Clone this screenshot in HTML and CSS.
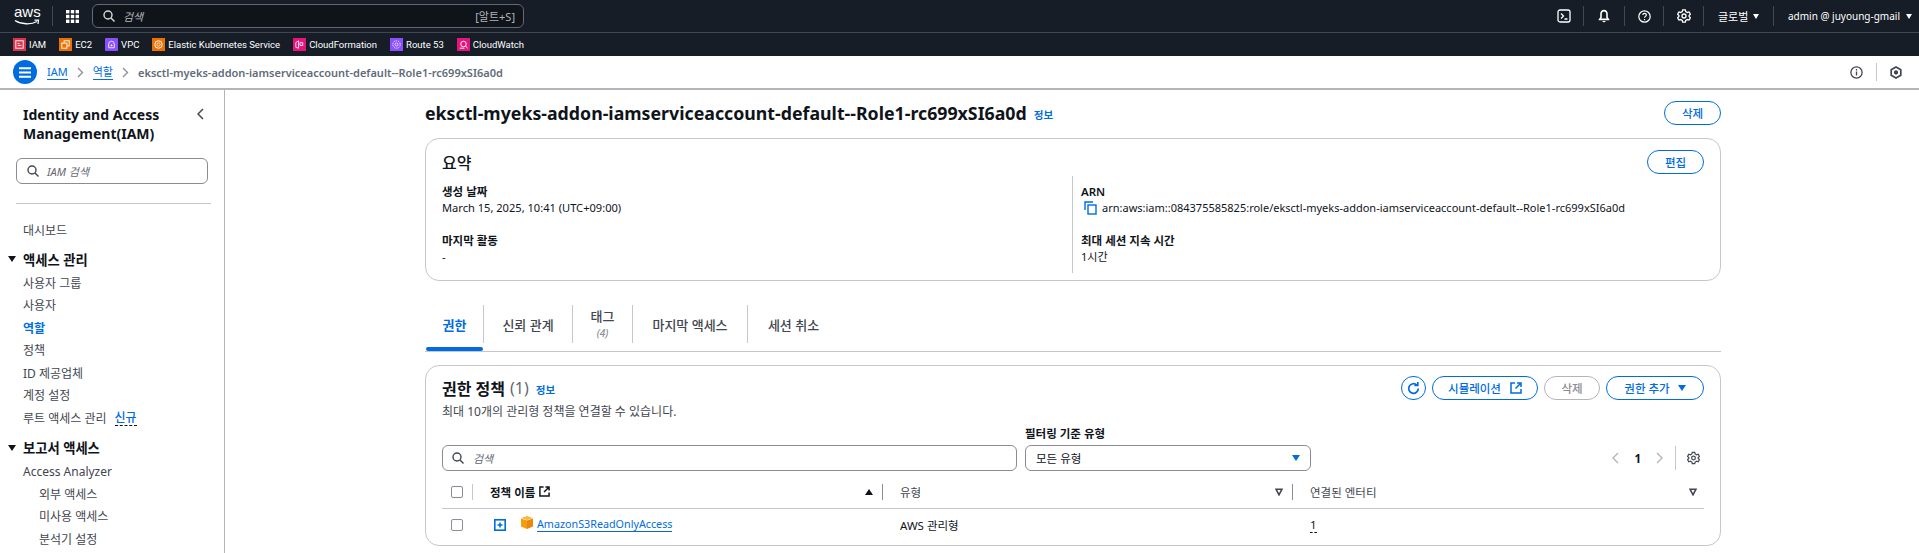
FILE: index.html
```html
<!DOCTYPE html>
<html lang="ko">
<head>
<meta charset="utf-8">
<title>IAM</title>
<link rel="stylesheet" href="styles.css">
</head>
<body>
<header class="topbar">
  <div class="aws-logo">
    <span class="aws-word">aws</span>
    <svg class="aws-smile" width="26" height="7" viewBox="0 0 26 7"><path d="M1 1.500C7 5.500 17 6 23 2.500" fill="none" stroke="#fff" stroke-width="1.400"/><path d="M20.500 1.200L24.500 1.200L24 5" fill="none" stroke="#fff" stroke-width="1.200"/></svg>
  </div>
  <div class="top-sep"></div>
  <svg class="grid-icon" width="13" height="13" viewBox="0 0 13 13" fill="#fff"><rect width="3.400" height="3.400"/><rect x="4.800" width="3.400" height="3.400"/><rect x="9.600" width="3.400" height="3.400"/><rect y="4.800" width="3.400" height="3.400"/><rect x="4.800" y="4.800" width="3.400" height="3.400"/><rect x="9.600" y="4.800" width="3.400" height="3.400"/><rect y="9.600" width="3.400" height="3.400"/><rect x="4.800" y="9.600" width="3.400" height="3.400"/><rect x="9.600" y="9.600" width="3.400" height="3.400"/></svg>
  <div class="top-search">
    <svg width="12" height="12" viewBox="0 0 12 12" fill="none" stroke="#d5dbdb" stroke-width="1.400"><circle cx="5" cy="5" r="4"/><path d="M8 8l3.500 3.500"/></svg>
    <span class="top-ph">검색</span>
    <span class="top-key">[알트+S]</span>
  </div>
  <div class="top-right">
    <div class="top-cell top-first"><svg width="14" height="14" viewBox="0 0 14 14" fill="none" stroke="#fff" stroke-width="1.300"><rect x="1" y="1" width="12" height="12" rx="2"/><path d="M4 4.500L6.500 7L4 9.500M7.500 10H10.500"/></svg></div>
    <div class="top-cell cell-bell"><svg width="14" height="14" viewBox="0 0 14 14" fill="#fff"><path d="M7 .8C4.600.8 3.200 2.600 3.200 5v3.200L1.600 10.400v.9h10.800v-.9L10.800 8.200V5C10.800 2.600 9.400.8 7 .8zM5.300 12a1.800 1.800 0 0 0 3.400 0z"/><path d="M7 2.400C5.500 2.400 4.800 3.600 4.800 5v3.700l-.6.9h5.600l-.6-.9V5c0-1.400-.7-2.600-2.200-2.600z" fill="#161d26"/></svg></div>
    <div class="top-cell cell-help"><svg width="13" height="13" viewBox="0 0 13 13" fill="none" stroke="#fff" stroke-width="1.200"><circle cx="6.500" cy="6.500" r="5.700"/><path d="M4.800 5.100c0-2.200 3.500-2.200 3.500-.1 0 1.400-1.800 1.400-1.800 2.800"/><path d="M6.500 9v1.200"/></svg></div>
    <div class="top-cell cell-gear"><svg width="14" height="14" viewBox="0 0 16 16" fill="none" stroke="#fff" stroke-width="1.500"><path d="M6.500 1h3l.5 2 1.800 1 2-.6 1.500 2.600-1.500 1.400v1.200l1.500 1.400-1.500 2.600-2-.6-1.800 1-.5 2h-3l-.5-2-1.800-1-2 .6-1.500-2.600 1.500-1.400V7.400L.7 6l1.500-2.600 2 .6 1.800-1z"/><circle cx="8" cy="8" r="2.300"/></svg></div>
    <div class="top-cell cell-global"><span>글로벌</span><i class="caret-white"></i></div>
    <div class="top-cell cell-user"><span class="user-name">admin @ juyoung-gmail</span><i class="caret-white"></i></div>
  </div>
</header>

<nav class="shortcuts">
  <a class="sc"><svg class="sc-ic" viewBox="0 0 14 14"><rect width="14" height="14" fill="#dd344c"/><rect x="3" y="3" width="8" height="8" fill="none" stroke="#fff"/><path d="M5 6h2M5 8h4" stroke="#fff"/></svg>IAM</a>
  <a class="sc"><svg class="sc-ic" viewBox="0 0 14 14"><rect width="14" height="14" fill="#ed7100"/><rect x="5.500" y="3" width="5.500" height="5.500" fill="none" stroke="#fff"/><rect x="3" y="5.500" width="5.500" height="5.500" fill="#ed7100" stroke="#fff"/></svg>EC2</a>
  <a class="sc"><svg class="sc-ic" viewBox="0 0 14 14"><rect width="14" height="14" rx="1" fill="#8c4fff"/><path d="M4 6.500a3 3 0 0 1 6 0v4H4z" fill="none" stroke="#fff" stroke-width=".9"/><circle cx="7" cy="8" r="1" fill="#fff"/></svg>VPC</a>
  <a class="sc"><svg class="sc-ic" viewBox="0 0 14 14"><rect width="14" height="14" fill="#ed7100"/><circle cx="7" cy="7" r="4" fill="none" stroke="#fff"/><circle cx="7" cy="7" r="1.800" fill="none" stroke="#fff" stroke-width=".8"/></svg>Elastic Kubernetes Service</a>
  <a class="sc"><svg class="sc-ic" viewBox="0 0 14 14"><rect width="14" height="14" fill="#e7157b"/><path d="M3 5l3-2v8l-3-1zM7.500 5h3v3h-3z" fill="none" stroke="#fff" stroke-width=".9"/></svg>CloudFormation</a>
  <a class="sc"><svg class="sc-ic" viewBox="0 0 14 14"><rect width="14" height="14" fill="#8c4fff"/><circle cx="7" cy="7" r="4" fill="none" stroke="#fff" stroke-dasharray="1.500 1"/><circle cx="7" cy="7" r="1.600" fill="none" stroke="#fff" stroke-width=".8"/></svg>Route 53</a>
  <a class="sc"><svg class="sc-ic" viewBox="0 0 14 14"><rect width="14" height="14" fill="#e7157b"/><circle cx="7" cy="6.500" r="3" fill="none" stroke="#fff"/><path d="M9 8.500l2.500 2.500M3 11h5" stroke="#fff"/></svg>CloudWatch</a>
</nav>

<div class="crumbs">
  <button class="menu-btn" aria-label="menu"><svg width="12" height="11" viewBox="0 0 12 11" stroke="#fff" stroke-width="2"><path d="M0 1.200h12M0 5.500h12M0 9.800h12"/></svg></button>
  <a class="crumb-link crumb-iam">IAM</a>
  <svg class="crumb-sep" width="7" height="11" viewBox="0 0 7 11" fill="none" stroke="#8c8c94" stroke-width="1.300"><path d="M1 1l4.500 4.500L1 10"/></svg>
  <a class="crumb-link">역할</a>
  <svg class="crumb-sep" width="7" height="11" viewBox="0 0 7 11" fill="none" stroke="#8c8c94" stroke-width="1.300"><path d="M1 1l4.500 4.500L1 10"/></svg>
  <span class="crumb-cur">eksctl-myeks-addon-iamserviceaccount-default--Role1-rc699xSI6a0d</span>
  <div class="crumb-tools">
    <svg width="13" height="13" viewBox="0 0 13 13" fill="none" stroke="#424650" stroke-width="1.300"><circle cx="6.500" cy="6.500" r="5.600"/><path d="M6.500 5.500v4M6.500 3v1.400"/></svg>
    <span class="tool-sep"></span>
    <svg width="12" height="13" viewBox="0 0 12 13" fill="none" stroke="#424650" stroke-width="1.700"><path d="M6 1l4.800 2.800v5.400L6 12 1.200 9.200V3.800z"/><circle cx="6" cy="6.500" r="1.300" fill="#424650"/></svg>
  </div>
</div>

<div class="layout">
  <aside class="sidebar">
    <div class="side-head">
      <h2 class="side-title">Identity and Access Management(IAM)</h2>
      <svg class="side-close" width="7" height="12" viewBox="0 0 7 12" fill="none" stroke="#424650" stroke-width="1.500"><path d="M6 1L1 6l5 5"/></svg>
    </div>
    <div class="side-search">
      <svg width="12" height="12" viewBox="0 0 12 12" fill="none" stroke="#424650" stroke-width="1.400"><circle cx="5" cy="5" r="4"/><path d="M8 8l3.500 3.500"/></svg>
      <span class="ph">IAM 검색</span>
    </div>
    <hr class="side-rule">
    <a class="side-item first">대시보드</a>
    <div class="side-section"><i class="caret-black"></i>액세스 관리</div>
    <a class="side-item">사용자 그룹</a>
    <a class="side-item">사용자</a>
    <a class="side-item active">역할</a>
    <a class="side-item">정책</a>
    <a class="side-item">ID 제공업체</a>
    <a class="side-item">계정 설정</a>
    <a class="side-item">루트 액세스 관리<span class="new-tag">신규</span></a>
    <div class="side-section second"><i class="caret-black"></i>보고서 액세스</div>
    <a class="side-item">Access Analyzer</a>
    <a class="side-item sub">외부 액세스</a>
    <a class="side-item sub">미사용 액세스</a>
    <a class="side-item sub">분석기 설정</a>
  </aside>

  <main class="main">
    <div class="title-row">
      <h1 class="page-title">eksctl-myeks-addon-iamserviceaccount-default--Role1-rc699xSI6a0d</h1>
      <a class="info-link">정보</a>
      <button class="btn push">삭제</button>
    </div>

    <section class="card summary">
      <div class="card-top">
        <h2 class="summary-title">요약</h2>
        <button class="btn push">편집</button>
      </div>
      <div class="summary-grid">
        <div class="summary-col">
          <div class="kv-label">생성 날짜</div>
          <div class="kv-value">March 15, 2025, 10:41 (UTC+09:00)</div>
          <div class="kv-label gap">마지막 활동</div>
          <div class="kv-value">-</div>
        </div>
        <div class="summary-col right">
          <div class="kv-label">ARN</div>
          <div class="kv-value arn"><svg width="13" height="14" viewBox="0 0 13 14" fill="none" stroke="#006ce0" stroke-width="1.400"><path d="M1 9V1h8"/><rect x="4" y="4" width="8" height="9"/></svg>arn:aws:iam::084375585825:role/eksctl-myeks-addon-iamserviceaccount-default--Role1-rc699xSI6a0d</div>
          <div class="kv-label gap">최대 세션 지속 시간</div>
          <div class="kv-value">1시간</div>
        </div>
      </div>
    </section>

    <div class="tabs">
      <div class="tab tab-a active"><div class="tab-in">권한</div></div>
      <div class="tab tab-b"><div class="tab-in">신뢰 관계</div></div>
      <div class="tab tab-c"><div class="tab-in tab-two"><span>태그</span><small>(4)</small></div></div>
      <div class="tab tab-d"><div class="tab-in">마지막 액세스</div></div>
      <div class="tab tab-e"><div class="tab-in no-line">세션 취소</div></div>
    </div>

    <section class="card policies">
      <div class="pol-head">
        <div>
          <div class="pol-title-line"><h2 class="pol-title">권한 정책</h2><span class="pol-count">(1)</span><a class="info-link">정보</a></div>
          <p class="pol-desc">최대 10개의 관리형 정책을 연결할 수 있습니다.</p>
        </div>
        <div class="pol-actions">
          <button class="btn icon-btn" aria-label="refresh"><svg width="15" height="15" viewBox="0 0 15 15" fill="none" stroke="#006ce0" stroke-width="1.700"><path d="M12.300 7.500a4.800 4.800 0 1 1-1.500-3.500"/><path d="M11.800 1v3.400H8.400"/></svg></button>
          <button class="btn btn-sim">시뮬레이션<svg width="12" height="12" viewBox="0 0 12 12" fill="none" stroke="#006ce0" stroke-width="1.500"><path d="M5 1H1v10h10V7M7 1h4v4M11 1L5.500 6.500"/></svg></button>
          <button class="btn btn-off">삭제</button>
          <button class="btn btn-add">권한 추가<i class="caret-blue"></i></button>
        </div>
      </div>
      <div class="filters">
        <div class="pol-search">
          <svg width="12" height="12" viewBox="0 0 12 12" fill="none" stroke="#424650" stroke-width="1.400"><circle cx="5" cy="5" r="4"/><path d="M8 8l3.500 3.500"/></svg>
          <span class="ph">검색</span>
        </div>
        <div class="select-wrap">
          <label class="select-label">필터링 기준 유형</label>
          <div class="select"><span>모든 유형</span><i class="caret-blue"></i></div>
        </div>
        <div class="pager">
          <svg width="7" height="12" viewBox="0 0 7 12" fill="none" stroke="#b4b4bb" stroke-width="1.400"><path d="M6 1L1 6l5 5"/></svg>
          <b>1</b>
          <svg width="7" height="12" viewBox="0 0 7 12" fill="none" stroke="#b4b4bb" stroke-width="1.400"><path d="M1 1l5 5-5 5"/></svg>
          <span class="pager-sep"></span>
          <svg width="13" height="14" viewBox="0 0 16 16" fill="none" stroke="#424650" stroke-width="1.500"><path d="M6.500 1h3l.5 2 1.800 1 2-.6 1.500 2.600-1.500 1.400v1.200l1.500 1.400-1.500 2.600-2-.6-1.800 1-.5 2h-3l-.5-2-1.800-1-2 .6-1.500-2.600 1.500-1.400V7.400L.7 6l1.500-2.600 2 .6 1.800-1z"/><circle cx="8" cy="8" r="2.300"/></svg>
        </div>
      </div>
      <div class="table-head trow">
        <div class="c-check"><span class="checkbox"></span></div>
        <div class="c-name th th-b"><span class="th-strong">정책 이름</span><svg width="11" height="11" viewBox="0 0 12 12" fill="none" stroke="#0f141a" stroke-width="1.600"><path d="M5 1H1v10h10V7M7 1h4v4M11 1L5.500 6.500"/></svg><i class="sort-up"></i></div>
        <div class="c-type th">유형<svg class="sort-down" width="8" height="8" viewBox="0 0 8 8" fill="none" stroke="#424650" stroke-width="1.600"><path d="M1 1.200h6L4 6.800z"/></svg></div>
        <div class="c-ent th no-bar">연결된 엔터티<svg class="sort-down" width="8" height="8" viewBox="0 0 8 8" fill="none" stroke="#424650" stroke-width="1.600"><path d="M1 1.200h6L4 6.800z"/></svg></div>
      </div>
      <div class="table-row trow">
        <div class="c-check"><span class="checkbox"></span></div>
        <div class="c-name cell-name">
          <svg class="expand" width="12" height="12" viewBox="0 0 12 12"><rect x=".8" y=".8" width="10.400" height="10.400" fill="none" stroke="#006ce0" stroke-width="1.600"/><path d="M3.500 6h5M6 3.500v5" stroke="#006ce0" stroke-width="1.500"/></svg>
          <svg class="cube" width="12" height="13" viewBox="0 0 12 13"><path d="M0 2.500L6 4.500V13L0 10.500z" fill="#f59d0e"/><path d="M12 2.500L6 4.500V13l6-2.500z" fill="#e8890b"/><path d="M0 2L6 0l6 2-6 2z" fill="#f9b73c"/></svg>
          <a class="policy-link">AmazonS3ReadOnlyAccess</a>
        </div>
        <div class="c-type td">AWS 관리형</div>
        <div class="c-ent td"><span class="dotted">1</span></div>
      </div>
    </section>
  </main>
</div>
</body>
</html>
```

FILE: styles.css
```css
* { box-sizing: border-box; }
html, body { margin: 0; padding: 0; height: 553px; overflow: hidden; }
body { font-family: "Noto Sans", "Noto Sans CJK KR", sans-serif; font-size: 12px; color: #0f141a; background: #fff; }
h1, h2, p { margin: 0; }
button { font: inherit; background: none; }
i { display: inline-block; }

.topbar { height: 33px; background: #161d26; border-bottom: 1px solid #424650; display: flex; align-items: center; padding-left: 14px; color: #fff; }
.aws-logo { position: relative; width: 25px; height: 24px; }
.aws-word { display: block; font-family: "Liberation Sans", sans-serif; font-size: 15px; line-height: 15px; color: #fff; text-align: center; }
.aws-smile { position: absolute; left: 0; top: 15px; }
.top-sep { width: 1px; height: 20px; background: #424650; margin: 0 13px; }
.grid-icon { flex: none; }
.top-search { width: 432px; height: 24px; margin-left: 13px; border: 1px solid #656871; border-radius: 6px; background: #0f141a; display: flex; align-items: center; padding: 0 8px 0 10px; color: #b4b4bb; }
.top-ph { margin-left: 8px; font-style: italic; font-size: 11px; }
.top-key { margin-left: auto; font-size: 11px; }
.top-right { margin-left: auto; display: flex; align-items: center; }
.top-cell { height: 20px; display: flex; align-items: center; justify-content: center; border-left: 1px solid #424650; font-size: 11px; color: #fff; }
.top-first { border-left: 0; width: 38px; }
.cell-bell { width: 41px; }
.cell-help { width: 39px; }
.cell-gear { width: 40px; }
.cell-global { width: 70px; gap: 5px; justify-content: flex-start; padding-left: 14px; }
.cell-user { width: 146px; gap: 6px; justify-content: flex-start; padding-left: 14px; }
.user-name { white-space: nowrap; font-size: 10px; }
.caret-white { width: 0; height: 0; border: 3.500px solid transparent; border-top: 5px solid #fff; border-bottom: 0; }

.shortcuts { height: 23px; background: #161d26; display: flex; align-items: center; gap: 13px; padding-left: 13px; }
.sc { display: flex; align-items: center; gap: 3px; color: #fff; font-size: 9.500px; font-family: Roboto, sans-serif; white-space: nowrap; }
.sc-ic { width: 13px; height: 13px; flex: none; }

.crumbs { height: 34px; background: #fff; border-bottom: 2px solid #b4b4bb; display: flex; align-items: center; padding-left: 13px; }
.menu-btn { width: 24px; height: 24px; border: 0; border-radius: 50%; background: #006ce0; display: flex; align-items: center; justify-content: center; padding: 0; }
.crumb-link { color: #006ce0; border-bottom: 1px solid #006ce0; line-height: 15px; font-size: 11px; }
.crumb-iam { margin-left: 10px; }
.crumb-sep { margin: 0 9px; }
.crumb-cur { color: #5f6b7a; font-weight: 600; font-size: 11px; }
.crumb-tools { margin-left: auto; display: flex; align-items: center; padding-right: 17px; }
.tool-sep { width: 1px; height: 18px; background: #c6c6cd; margin: 0 13px; }

.layout { display: flex; height: 463px; overflow: hidden; }
.sidebar { width: 225px; flex: none; border-right: 1px solid #b4b4bb; padding: 15px 0 0 0; overflow: hidden; color: #424650; }
.side-head { display: flex; justify-content: space-between; padding: 0 20px 0 23px; }
.side-title { font-size: 14px; line-height: 19px; font-weight: 700; color: #0f141a; width: 160px; }
.side-close { margin-top: 3px; }
.side-search { margin: 15px 0 0 16px; width: 192px; height: 26px; border: 1px solid #8c8c94; border-radius: 6px; display: flex; align-items: center; padding-left: 10px; gap: 8px; }
.ph { font-style: italic; color: #656871; font-size: 11px; }
.side-rule { margin: 19px 13px 0 16px; border: 0; border-top: 1px solid #c6c6cd; }
.side-item { display: flex; align-items: center; height: 22.500px; padding-left: 23px; font-size: 12px; color: #424650; }
.side-item.first { margin-top: 15px; }
.side-item.active { color: #006ce0; font-weight: 600; }
.side-item.sub { padding-left: 39px; }
.side-section { display: flex; align-items: center; height: 25px; margin-top: 5px; padding-left: 8px; font-size: 13.300px; font-weight: 700; color: #0f141a; gap: 7px; }
.side-section.second { margin-top: 6px; }
.caret-black { width: 0; height: 0; border: 4px solid transparent; border-top: 6px solid #0f141a; border-bottom: 0; }
.new-tag { color: #006ce0; margin-left: 8px; border-bottom: 1px dashed #0f141a; line-height: 15px; font-weight: 500; }

.main { width: 1296px; margin-left: 200px; padding-top: 11px; flex: none; }
.title-row { display: flex; align-items: center; height: 24px; }
.page-title { font-size: 17.750px; font-weight: 700; color: #0f141a; white-space: nowrap; }
.info-link { color: #006ce0; font-size: 10.500px; font-weight: 600; margin-left: 7px; margin-top: 3px; }
.btn { height: 24px; border: 1.500px solid #006ce0; border-radius: 12px; color: #006ce0; font-weight: 500; font-size: 11.500px; padding: 0; display: flex; align-items: center; justify-content: center; }
.push { margin-left: auto; width: 57px; }
.card { border: 1px solid #c6c6cd; border-radius: 14px; }
.summary { margin-top: 13px; height: 143px; padding: 11px 16px 0 16px; }
.card-top { display: flex; align-items: center; height: 24px; }
.summary-title { font-size: 16px; font-weight: 500; }
.summary-grid { display: grid; grid-template-columns: 630px 1fr; margin-top: 2px; }
.summary-col { padding-top: 8px; height: 97px; }
.summary-col.right { border-left: 1px solid #c6c6cd; padding-left: 8px; }
.kv-label { font-size: 11.500px; line-height: 16px; font-weight: 600; color: #0f141a; }
.kv-label.gap { margin-top: 16px; }
.kv-value { font-size: 11.100px; line-height: 16.500px; color: #0f141a; }
.kv-value.arn { display: flex; align-items: center; gap: 5px; padding-left: 3px; font-size: 11px; }

.tabs { margin-top: 24px; height: 47px; display: flex; border-bottom: 1px solid #c6c6cd; padding-left: 1px; }
.tab { height: 46px; padding-bottom: 8px; position: relative; }
.tab-in { height: 38px; border-right: 1px solid #c6c6cd; display: flex; flex-direction: column; align-items: center; justify-content: center; font-size: 13px; font-weight: 500; color: #424650; }
.tab-in.no-line { border-right: 0; }
.tab-two { line-height: 18px; }
.tab-two small { font-size: 10px; font-style: italic; color: #8c8c94; line-height: 16px; }
.tab-a { width: 58px; }
.tab-b { width: 89px; }
.tab-c { width: 60px; }
.tab-d { width: 115px; }
.tab-e { width: 91px; }
.tab.active .tab-in { color: #006ce0; font-weight: 600; }
.tab.active::after { content: ""; position: absolute; left: 0; right: 1px; bottom: 0; height: 4px; border-radius: 2px; background: #006ce0; }

.policies { margin-top: 13px; height: 181px; padding: 10px 16px 0 16px; }
.pol-head { display: flex; justify-content: space-between; align-items: flex-start; height: 50px; }
.pol-title-line { display: flex; align-items: center; height: 24px; }
.pol-title { font-size: 16px; font-weight: 700; }
.pol-count { font-size: 16px; color: #656871; margin-left: 5px; }
.pol-desc { margin-top: 4px; font-size: 12px; line-height: 16px; color: #424650; }
.pol-actions { display: flex; gap: 6px; }
.icon-btn { width: 25px; }
.btn-sim { width: 106px; gap: 9px; }
.btn-off { width: 56px; border-color: #b4b4bb; color: #8c8c94; }
.btn-add { width: 98px; gap: 8px; }
.caret-blue { width: 0; height: 0; border: 4px solid transparent; border-top: 6px solid #006ce0; border-bottom: 0; }

.filters { display: flex; align-items: flex-end; gap: 8px; height: 45px; }
.pol-search { width: 575px; height: 26px; border: 1px solid #8c8c94; border-radius: 6px; display: flex; align-items: center; padding-left: 9px; gap: 9px; }
.select-wrap { width: 286px; }
.select-label { display: block; font-size: 11.500px; font-weight: 600; line-height: 16px; margin-bottom: 3px; }
.select { height: 26px; border: 1px solid #8c8c94; border-radius: 6px; display: flex; align-items: center; justify-content: space-between; padding: 0 10px; font-size: 11.500px; }
.pager { margin-left: auto; height: 26px; display: flex; align-items: center; color: #0f141a; padding-right: 4px; }
.pager b { margin: 0 15px; font-size: 11.500px; }
.pager-sep { width: 1px; height: 24px; background: #c6c6cd; margin: 0 11px 0 12px; }

.trow { display: grid; grid-template-columns: 31px 410px 410px 1fr; align-items: center; }
.table-head { height: 32px; margin-top: 6px; padding-bottom: 2px; border-bottom: 1px solid #c6c6cd; }
.table-row { height: 31px; }
.c-check { padding-left: 9px; display: flex; align-items: center; height: 16px; }
.table-head .c-check { border-right: 1px solid #c6c6cd; }
.checkbox { width: 12px; height: 12px; border: 1.500px solid #8c8c94; border-radius: 2px; display: block; }
.th { display: flex; align-items: center; height: 16px; font-size: 11.500px; color: #424650; padding-left: 17px; gap: 4px; border-right: 1px solid #8c8c94; padding-right: 9px; }
.th.no-bar { border-right: 0; padding-right: 7px; }
.th i, .th .sort-down { margin-left: auto; }
.th-strong { font-weight: 700; color: #0f141a; }
.sort-up { width: 0; height: 0; border: 4px solid transparent; border-bottom: 6px solid #0f141a; border-top: 0; }
.cell-name { display: flex; align-items: center; padding-left: 21px; }
.expand { margin-right: 15px; }
.cube { margin-right: 4px; margin-top: -4px; }
.policy-link { color: #006ce0; border-bottom: 1px solid #006ce0; font-size: 10.750px; line-height: 14px; }
.td { padding-left: 17px; font-size: 11.500px; color: #0f141a; }
.dotted { border-bottom: 1px dashed #0f141a; }
```
